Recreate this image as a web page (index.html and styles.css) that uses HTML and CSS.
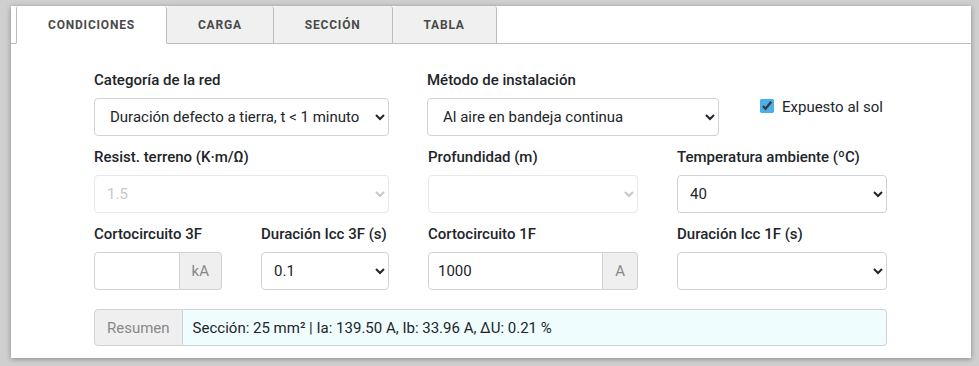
FILE: index.html
```html
<!DOCTYPE html>
<html lang="es">
<head>
    <meta charset="UTF-8">
    <meta name="viewport" content="width=device-width, initial-scale=1.0">
    <title>Condiciones</title>
    <link rel="stylesheet" href="styles.css">
</head>
<body>
    <div class="card">
        <div class="tabs">
            <div class="tab active">Condiciones</div>
            <div class="tab">Carga</div>
            <div class="tab">Sección</div>
            <div class="tab">Tabla</div>
            <div class="tab-fill"></div>
        </div>

        <div class="panel">
            <div class="row row-top">
                <div class="field">
                    <label>Categoría de la red</label>
                    <select class="control wide-pad">
                        <option>Duración defecto a tierra, t &lt; 1 minuto</option>
                    </select>
                </div>
                <div class="field">
                    <label>Método de instalación</label>
                    <select class="control wide-pad">
                        <option>Al aire en bandeja continua</option>
                    </select>
                </div>
                <label class="check">
                    <input type="checkbox" checked>
                    <span>Expuesto al sol</span>
                </label>
            </div>

            <div class="row">
                <div class="field span-2">
                    <label>Resist. terreno (K·m/Ω)</label>
                    <select class="control" disabled>
                        <option>1.5</option>
                    </select>
                </div>
                <div class="field">
                    <label>Profundidad (m)</label>
                    <select class="control" disabled>
                        <option></option>
                    </select>
                </div>
                <div class="field">
                    <label>Temperatura ambiente (ºC)</label>
                    <select class="control">
                        <option>40</option>
                    </select>
                </div>
            </div>

            <div class="row">
                <div class="field">
                    <label>Cortocircuito 3F</label>
                    <div class="input-group">
                        <input class="control" type="text" value="">
                        <span class="addon">kA</span>
                    </div>
                </div>
                <div class="field">
                    <label>Duración Icc 3F (s)</label>
                    <select class="control">
                        <option>0.1</option>
                    </select>
                </div>
                <div class="field">
                    <label>Cortocircuito 1F</label>
                    <div class="input-group">
                        <input class="control" type="text" value="1000">
                        <span class="addon">A</span>
                    </div>
                </div>
                <div class="field">
                    <label>Duración Icc 1F (s)</label>
                    <select class="control">
                        <option></option>
                    </select>
                </div>
            </div>

            <div class="summary">
                <span class="addon">Resumen</span>
                <span class="summary-text">Sección: 25 mm² | Ia: 139.50 A, Ib: 33.96 A, ΔU: 0.21 %</span>
            </div>
        </div>
    </div>
</body>
</html>
```

FILE: styles.css
```css
body {
    margin: 0;
    padding: 6px 8px 8px 11px;
    background-color: #cfcfcf;
    font-family: Roboto, 'Liberation Sans', Arial, sans-serif;
    color: #212529;
}

.card {
    width: 960px;
    height: 352px;
    background: white;
    box-shadow: 0 1px 5px rgba(0, 0, 0, 0.35);
    box-sizing: border-box;
}

.tabs {
    display: flex;
    height: 38px;
    padding-left: 5px;
}

.tab {
    display: flex;
    align-items: center;
    justify-content: center;
    padding: 0 31px;
    background: #f0f0f0;
    border-right: 1px solid #bdbdbd;
    border-bottom: 1px solid #bdbdbd;
    border-radius: 3px 3px 0 0;
    font-size: 12px;
    font-weight: 700;
    letter-spacing: 0.8px;
    text-transform: uppercase;
    color: #4a4a4a;
}

.tab.active {
    background: white;
    border-left: 1px solid #bdbdbd;
    border-bottom-color: transparent;
}

.tab-fill {
    flex: 1;
    border-bottom: 1px solid #bdbdbd;
}

.tabs::before {
    content: '';
    width: 5px;
    margin-left: -5px;
    border-bottom: 1px solid #bdbdbd;
}

.panel {
    width: 793px;
    margin-left: 83px;
    padding-top: 26px;
}

.row {
    display: grid;
    grid-template-columns: 128px 128px 210px 210px;
    column-gap: 39px;
    margin-bottom: 11px;
}

.row-top {
    grid-template-columns: 295px 292px 1fr;
    column-gap: 38px;
}

.span-2 {
    grid-column: span 2;
}

.field label {
    display: block;
    font-size: 15px;
    font-weight: 500;
    line-height: 21px;
    margin-bottom: 7px;
}

.control {
    display: block;
    width: 100%;
    height: 38px;
    box-sizing: border-box;
    padding: 0 0 0 8px;
    border: 1px solid #cfd3d7;
    border-radius: 4px;
    background: white;
    font-family: inherit;
    font-size: 15px;
    color: #212529;
}

.wide-pad {
    padding-left: 11px;
}

select.control:disabled {
    border-color: #e8e8e8;
    color: #c8c8c8;
    opacity: 1;
}

.check {
    display: flex;
    align-items: flex-start;
    gap: 8px;
    margin: 28px 0 0 3px;
    font-size: 15px;
    line-height: 18px;
}

.check input {
    width: 14px;
    height: 14px;
    margin: 1px 0 0;
    accent-color: #4ab0ea;
}

.input-group {
    display: flex;
}

.input-group .control {
    flex: 1;
    min-width: 0;
    border-radius: 4px 0 0 4px;
    padding-left: 9px;
}

.addon {
    display: flex;
    align-items: center;
    padding: 0 12px;
    background: #efefef;
    border: 1px solid #cfd3d7;
    border-left: none;
    border-radius: 0 4px 4px 0;
    font-size: 15px;
    color: #888;
}

.summary {
    display: flex;
    height: 37px;
    margin-top: 19px;
}

.summary .addon {
    padding: 0 12px;
    border-left: 1px solid #cfd3d7;
    border-radius: 4px 0 0 4px;
}

.summary-text {
    flex: 1;
    display: flex;
    align-items: center;
    padding: 0 10px;
    background: #effdff;
    border: 1px solid #cfd3d7;
    border-left: none;
    border-radius: 0 4px 4px 0;
    font-size: 15px;
}
```
